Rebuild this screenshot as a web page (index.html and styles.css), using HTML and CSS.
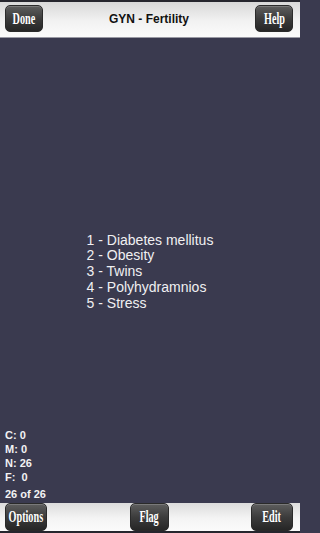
FILE: index.html
```html
<!DOCTYPE html>
<html>
<head>
<meta charset="utf-8">
<link rel="stylesheet" href="styles.css">
</head>
<body>
<div class="app">
  <div class="edge"></div>
  <header class="navbar">
    <button class="btn btn-sm"><span>Done</span></button>
    <h1 class="title">GYN - Fertility</h1>
    <button class="btn btn-sm"><span>Help</span></button>
  </header>
  <main class="content">
    <ul class="answers">
      <li>1 - Diabetes mellitus</li>
      <li>2 - Obesity</li>
      <li>3 - Twins</li>
      <li>4 - Polyhydramnios</li>
      <li>5 - Stress</li>
    </ul>
    <div class="stats">
      <div class="stat">C: 0</div>
      <div class="stat">M: 0</div>
      <div class="stat">N: 26</div>
      <div class="stat">F:  0</div>
      <div class="stat count">26 of 26</div>
    </div>
  </main>
  <footer class="toolbar">
    <button class="btn btn-wide"><span>Options</span></button>
    <button class="btn btn-flag"><span>Flag</span></button>
    <button class="btn btn-wide"><span>Edit</span></button>
  </footer>
  <div class="edge"></div>
</div>
</body>
</html>
```
FILE: styles.css
```css
html, body {
  margin: 0;
  padding: 0;
  background: #3a3a4f;
  overflow: hidden;
}
.app {
  width: 300px;
  height: 533px;
  display: flex;
  flex-direction: column;
  overflow: hidden;
}
.edge {
  height: 2px;
  background: #26262e;
  flex: none;
}
.navbar {
  height: 36px;
  flex: none;
  box-sizing: border-box;
  padding: 3px 7px 5px 5px;
  display: flex;
  align-items: stretch;
  justify-content: space-between;
  background: linear-gradient(#d8d8d8, #f2f2f2 55%, #fbfbfb);
  border-bottom: 1px solid #9a9aa4;
}
.title {
  margin: 0;
  align-self: center;
  font: bold 12px "Liberation Sans", Arial, sans-serif;
  color: #111;
}
.btn {
  margin: 0;
  padding: 0;
  border: 1px solid #2a2a2a;
  border-radius: 5px;
  background: linear-gradient(#5e5e5e, #3c3c3c 50%, #262626);
  box-shadow: inset 0 1px 0 rgba(255,255,255,0.18);
  color: #fff;
  display: flex;
  align-items: center;
  justify-content: center;
  overflow: hidden;
}
.btn span {
  display: inline-block;
  font: bold 17px "Liberation Serif", "Times New Roman", serif;
  transform: scaleX(0.6);
  white-space: nowrap;
}
.btn-sm { width: 38px; }
.btn-wide { width: 42px; }
.btn-flag { width: 39px; }
.content {
  flex: 1;
  display: grid;
  grid-template-areas: "stack";
  padding-top: 3px;
  min-height: 0;
}
.answers {
  grid-area: stack;
  align-self: center;
  justify-self: center;
  list-style: none;
  margin: 0;
  padding: 0;
  font: 14px "Liberation Sans", Arial, sans-serif;
  line-height: 15.7px;
  color: #f0f0f2;
}
.stats {
  grid-area: stack;
  align-self: end;
  justify-self: start;
  padding: 0 0 2px 5px;
  font: bold 11px "Liberation Sans", Arial, sans-serif;
  line-height: 14px;
  color: #f2f2f4;
}
.stat {
  white-space: pre;
}
.stats .count {
  margin-top: 3px;
}
.toolbar {
  height: 28px;
  flex: none;
  box-sizing: border-box;
  padding: 0 7px 0 5px;
  display: flex;
  align-items: stretch;
  justify-content: space-between;
  background: linear-gradient(#dcdcdc, #f4f4f4 55%, #fbfbfb);
}
```
